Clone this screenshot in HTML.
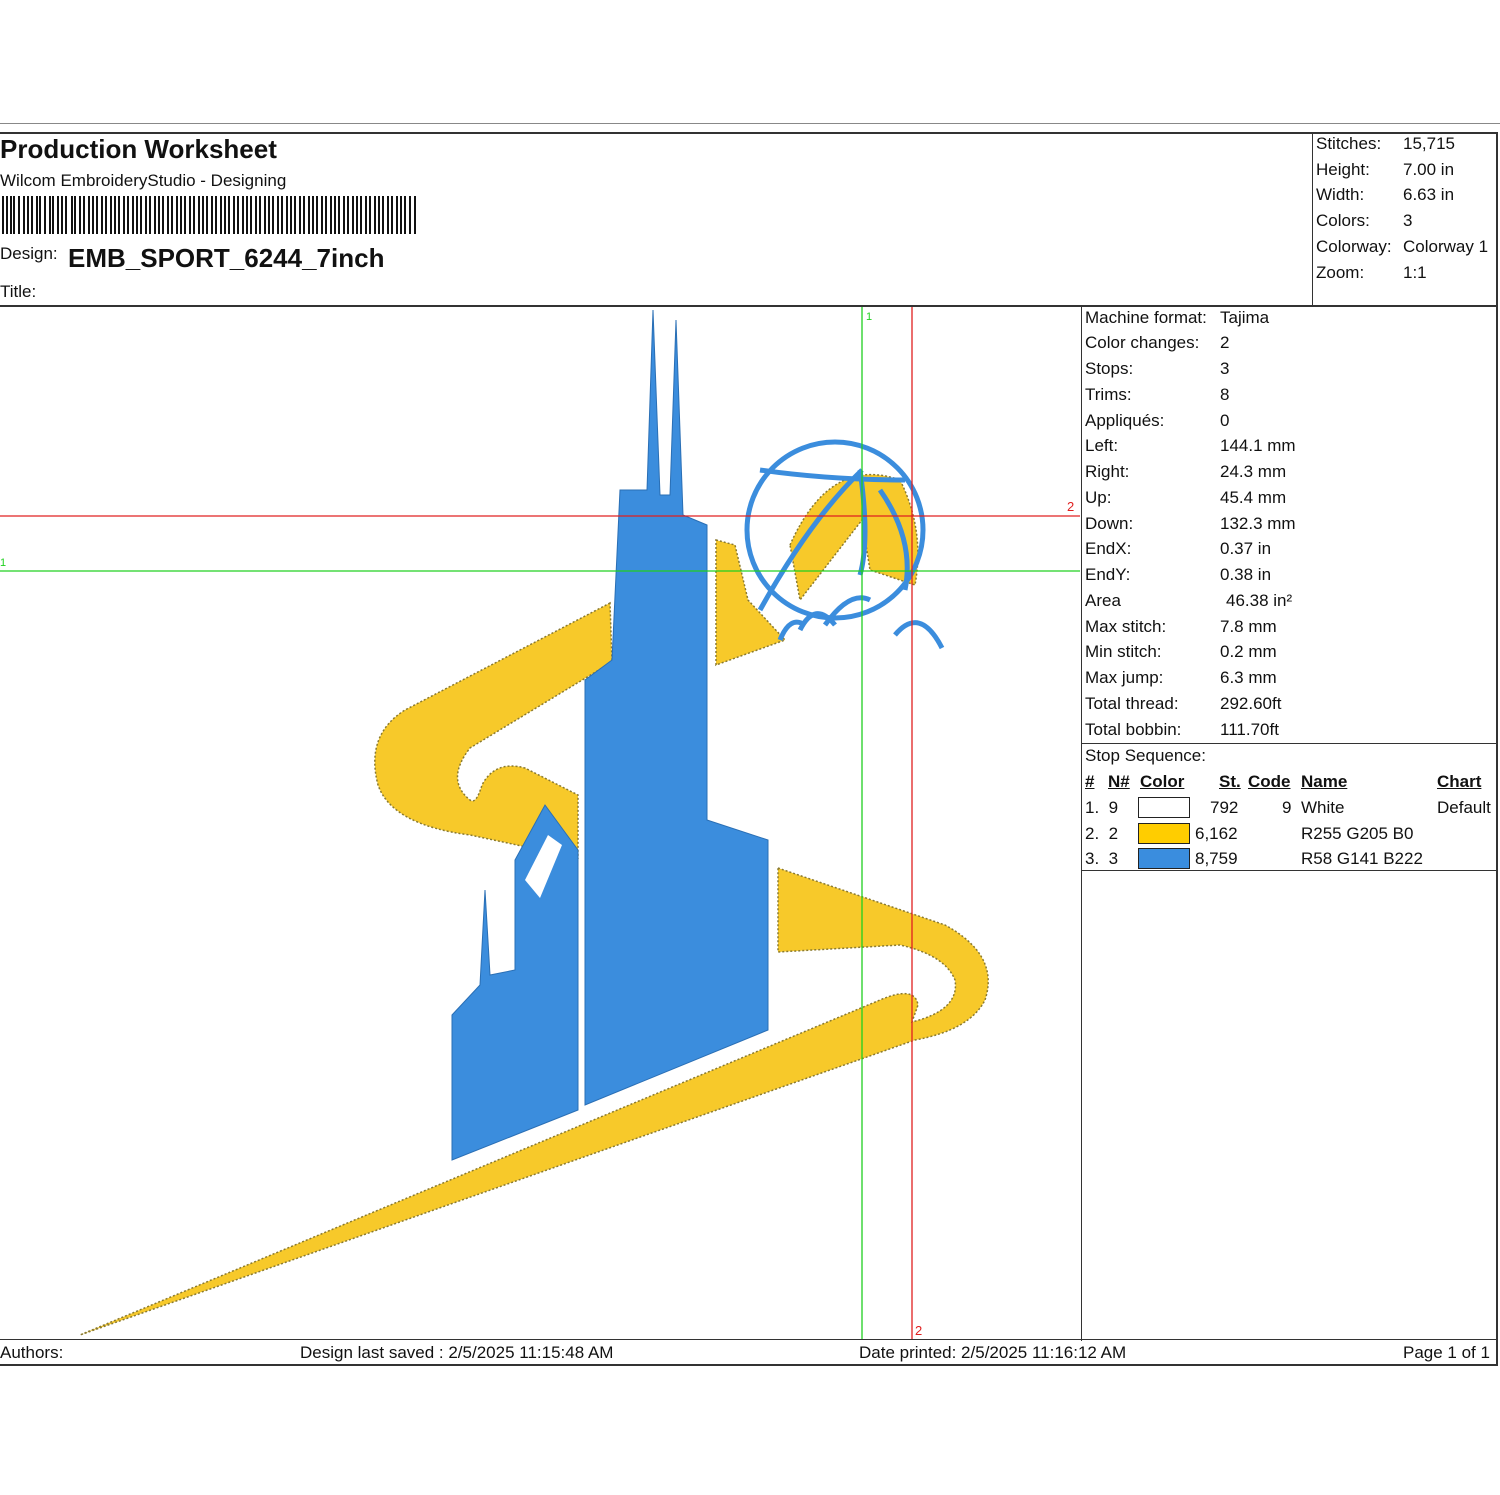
<!DOCTYPE html>
<html><head><meta charset="utf-8"><style>
body{margin:0;width:1500px;height:1495px;background:#fff;position:relative;font-family:"Liberation Sans",Arial,sans-serif;color:#111;overflow:hidden}
.a{position:absolute;white-space:nowrap;font-size:17px;line-height:20px}
.l{position:absolute;background:#333}
u{text-decoration:underline}
</style></head><body>
<div class="l" style="left:0;top:123px;width:1500px;height:1px;background:#888"></div>
<div class="l" style="left:0;top:132px;width:1498px;height:2px"></div>
<div class="l" style="left:1496px;top:132px;width:2px;height:1234px"></div>
<div class="l" style="left:0;top:305px;width:1498px;height:2px"></div>
<div class="l" style="left:1312px;top:132px;width:1px;height:174px"></div>
<div class="l" style="left:1081px;top:306px;width:1px;height:1035px"></div>
<div class="l" style="left:1081px;top:743px;width:416px;height:1px"></div>
<div class="l" style="left:1081px;top:870px;width:416px;height:1px"></div>
<div class="l" style="left:0;top:1339px;width:1498px;height:1px"></div>
<div class="l" style="left:0;top:1364px;width:1498px;height:2px"></div>

<div class="a" style="left:0;top:135px;font-size:26px;line-height:28px;font-weight:bold">Production Worksheet</div>
<div class="a" style="left:0;top:171px">Wilcom EmbroideryStudio - Designing</div>
<svg style="position:absolute;left:2px;top:196px" width="416" height="38">
<g stroke="#111">
<path d="M1 0V38M5 0V38M9 0V38M12 0V38M17 0V38M22 0V38M26 0V38M30 0V38M35 0V38M38 0V38M43 0V38M48 0V38M51 0V38M56 0V38M60 0V38M64 0V38M70 0V38M73 0V38M78 0V38M82 0V38M87 0V38M91 0V38M95 0V38M100 0V38M104 0V38M109 0V38M113 0V38M117 0V38M122 0V38M126 0V38M131 0V38M135 0V38M139 0V38M144 0V38M148 0V38M153 0V38M157 0V38M161 0V38M166 0V38M170 0V38M175 0V38M179 0V38M183 0V38M188 0V38M192 0V38M197 0V38M201 0V38M205 0V38M210 0V38M214 0V38M219 0V38M223 0V38M227 0V38M232 0V38M236 0V38M241 0V38M245 0V38M249 0V38M254 0V38M258 0V38M263 0V38M267 0V38M271 0V38M276 0V38M280 0V38M285 0V38M289 0V38M293 0V38M298 0V38M302 0V38M307 0V38M311 0V38M315 0V38M320 0V38M324 0V38M329 0V38M333 0V38M337 0V38M342 0V38M346 0V38M351 0V38M355 0V38M359 0V38M364 0V38M368 0V38M373 0V38M377 0V38M381 0V38M386 0V38M390 0V38M395 0V38M399 0V38M403 0V38M408 0V38M413 0V38" stroke-width="2"/>
</g></svg>
<div class="a" style="left:0;top:244px">Design:</div>
<div class="a" style="left:68px;top:243px;font-size:26px;line-height:30px;font-weight:bold">EMB_SPORT_6244_7inch</div>
<div class="a" style="left:0;top:282px">Title:</div>

<div class="a" style="left:1316px;top:134px">Stitches:</div><div class="a" style="left:1403px;top:134px">15,715</div>
<div class="a" style="left:1316px;top:160px">Height:</div><div class="a" style="left:1403px;top:160px">7.00 in</div>
<div class="a" style="left:1316px;top:185px">Width:</div><div class="a" style="left:1403px;top:185px">6.63 in</div>
<div class="a" style="left:1316px;top:211px">Colors:</div><div class="a" style="left:1403px;top:211px">3</div>
<div class="a" style="left:1316px;top:237px">Colorway:</div><div class="a" style="left:1403px;top:237px">Colorway 1</div>
<div class="a" style="left:1316px;top:263px">Zoom:</div><div class="a" style="left:1403px;top:263px">1:1</div>

<div class="a" style="left:1085px;top:308px">Machine format:</div><div class="a" style="left:1220px;top:308px">Tajima</div>
<div class="a" style="left:1085px;top:333px">Color changes:</div><div class="a" style="left:1220px;top:333px">2</div>
<div class="a" style="left:1085px;top:359px">Stops:</div><div class="a" style="left:1220px;top:359px">3</div>
<div class="a" style="left:1085px;top:385px">Trims:</div><div class="a" style="left:1220px;top:385px">8</div>
<div class="a" style="left:1085px;top:411px">Appliqués:</div><div class="a" style="left:1220px;top:411px">0</div>
<div class="a" style="left:1085px;top:436px">Left:</div><div class="a" style="left:1220px;top:436px">144.1 mm</div>
<div class="a" style="left:1085px;top:462px">Right:</div><div class="a" style="left:1220px;top:462px">24.3 mm</div>
<div class="a" style="left:1085px;top:488px">Up:</div><div class="a" style="left:1220px;top:488px">45.4 mm</div>
<div class="a" style="left:1085px;top:514px">Down:</div><div class="a" style="left:1220px;top:514px">132.3 mm</div>
<div class="a" style="left:1085px;top:539px">EndX:</div><div class="a" style="left:1220px;top:539px">0.37 in</div>
<div class="a" style="left:1085px;top:565px">EndY:</div><div class="a" style="left:1220px;top:565px">0.38 in</div>
<div class="a" style="left:1085px;top:591px">Area</div><div class="a" style="left:1226px;top:591px">46.38 in²</div>
<div class="a" style="left:1085px;top:617px">Max stitch:</div><div class="a" style="left:1220px;top:617px">7.8 mm</div>
<div class="a" style="left:1085px;top:642px">Min stitch:</div><div class="a" style="left:1220px;top:642px">0.2 mm</div>
<div class="a" style="left:1085px;top:668px">Max jump:</div><div class="a" style="left:1220px;top:668px">6.3 mm</div>
<div class="a" style="left:1085px;top:694px">Total thread:</div><div class="a" style="left:1220px;top:694px">292.60ft</div>
<div class="a" style="left:1085px;top:720px">Total bobbin:</div><div class="a" style="left:1220px;top:720px">111.70ft</div>

<div class="a" style="left:1085px;top:746px">Stop Sequence:</div>
<div class="a" style="left:1085px;top:772px;font-weight:bold"><u>#</u></div>
<div class="a" style="left:1108px;top:772px;font-weight:bold"><u>N#</u></div>
<div class="a" style="left:1140px;top:772px;font-weight:bold"><u>Color</u></div>
<div class="a" style="left:1219px;top:772px;font-weight:bold"><u>St.</u></div>
<div class="a" style="left:1248px;top:772px;font-weight:bold"><u>Code</u></div>
<div class="a" style="left:1301px;top:772px;font-weight:bold"><u>Name</u></div>
<div class="a" style="left:1437px;top:772px;font-weight:bold"><u>Chart</u></div>
<div class="a" style="left:1085px;top:798px">1.&nbsp; 9</div>
<div style="position:absolute;left:1138px;top:797px;width:50px;height:19px;border:1px solid #222;background:#fff"></div>
<div class="a" style="left:1210px;top:798px">792</div><div class="a" style="left:1282px;top:798px">9</div><div class="a" style="left:1301px;top:798px">White</div><div class="a" style="left:1437px;top:798px">Default</div>
<div class="a" style="left:1085px;top:824px">2.&nbsp; 2</div>
<div style="position:absolute;left:1138px;top:823px;width:50px;height:19px;border:1px solid #222;background:#ffcd00"></div>
<div class="a" style="left:1195px;top:824px">6,162</div><div class="a" style="left:1301px;top:824px">R255 G205 B0</div>
<div class="a" style="left:1085px;top:849px">3.&nbsp; 3</div>
<div style="position:absolute;left:1138px;top:848px;width:50px;height:19px;border:1px solid #222;background:#3a8dde"></div>
<div class="a" style="left:1195px;top:849px">8,759</div><div class="a" style="left:1301px;top:849px">R58 G141 B222</div>

<div class="a" style="left:0;top:1343px">Authors:</div>
<div class="a" style="left:300px;top:1343px">Design last saved : 2/5/2025 11:15:48 AM</div>
<div class="a" style="left:859px;top:1343px">Date printed: 2/5/2025 11:16:12 AM</div>
<div class="a" style="left:1403px;top:1343px">Page 1 of 1</div>

<svg style="position:absolute;left:0;top:307px" width="1081" height="1032" viewBox="0 307 1081 1032">
<g fill="#f7c92a" stroke="#8a7a30" stroke-width="1.5" stroke-dasharray="2 2">
<path d="M610,603 L405,710 Q365,735 378,785 Q392,825 470,835 L578,858 L578,795 L525,768 Q495,760 482,785 Q476,805 470,800 Q445,780 470,748 L612,662 Z"/>
<path d="M716,540 L735,545 L748,600 L785,640 L716,665 Z"/>
<path d="M778,868 L945,925 Q1000,955 985,1000 Q970,1030 915,1040 L80,1335 L880,1000 Q915,985 918,1005 L912,1022 Q960,1010 955,980 Q945,955 900,945 L778,952 Z"/>
<path d="M790,545 Q830,455 900,480 Q925,530 915,585 L870,570 L862,520 L800,600 Z"/>
</g>
<g fill="#3b8ddd" stroke="#2a6fb5" stroke-width="1">
<path d="M585,1105 L585,680 L612,660 L620,490 L647,490 L653,310 L660,495 L670,495 L676,320 L683,515 L707,525 L707,820 L768,840 L768,1030 Z"/>
<path d="M452,1160 L452,1015 L480,985 L485,890 L490,975 L515,970 L515,860 L545,805 L578,850 L578,1110 Z"/>
</g>
<path d="M525,880 L548,835 L562,845 L540,898 Z" fill="#fff"/>
<g fill="none" stroke="#3b8ddd" stroke-width="5">
<circle cx="835" cy="530" r="88"/>
<path d="M760,470 Q830,480 905,480"/>
<path d="M860,470 Q870,540 860,575"/>
<path d="M760,610 Q810,520 862,470"/>
<path d="M880,490 Q915,540 905,590"/>
<path d="M780,640 Q790,615 805,625 M800,630 Q815,600 835,625 M825,625 Q850,590 870,600 M895,635 Q920,605 942,648"/>
</g>
<g stroke-width="1.3">
<line x1="0" y1="516" x2="1080" y2="516" stroke="#e02020"/>
<line x1="0" y1="571" x2="1080" y2="571" stroke="#20d020"/>
<line x1="862" y1="307" x2="862" y2="1339" stroke="#20d020"/>
<line x1="912" y1="307" x2="912" y2="1339" stroke="#e02020"/>
</g>
<text x="1067" y="511" font-size="13" fill="#e02020" font-family="Liberation Sans">2</text>
<text x="866" y="320" font-size="11" fill="#20d020" font-family="Liberation Sans">1</text>
<text x="0" y="566" font-size="11" fill="#20d020" font-family="Liberation Sans">1</text>
<text x="915" y="1335" font-size="13" fill="#e02020" font-family="Liberation Sans">2</text>
</svg>
</body></html>
